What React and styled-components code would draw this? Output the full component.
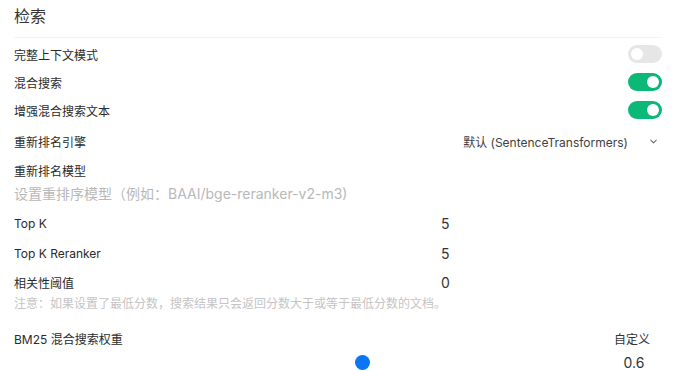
import React, { useState } from "react";
import styled, { createGlobalStyle } from "styled-components";

const GlobalStyle = createGlobalStyle`
  html, body {
    margin: 0;
    padding: 0;
    background: #ffffff;
  }
  body {
    font-family: "Inter", "Noto Sans CJK SC", sans-serif;
    color: #262626;
  }
`;

const Panel = styled.div`
  width: 648px;
  padding: 0 33px 0 14px;
  display: flex;
  flex-direction: column;
`;

const Title = styled.div`
  padding-top: 6px;
  height: 20px;
  line-height: 20px;
  font-size: 16px;
  font-weight: 400;
  color: #333;
`;

const Divider = styled.hr`
  margin: 11px 0 2px;
  border: none;
  height: 1px;
  background: #f3f3f3;
`;

const Row = styled.div`
  display: flex;
  align-items: center;
  justify-content: space-between;
  height: ${(p) => p.h || 28}px;
  margin-top: ${(p) => p.mt || 0}px;
`;

const Label = styled.div`
  font-size: 12px;
  font-weight: 400;
  color: #2a2a2a;
`;

const Track = styled.button`
  width: 34px;
  height: 18px;
  border-radius: 9px;
  border: none;
  padding: 0 3px;
  display: flex;
  align-items: center;
  justify-content: ${(p) => (p.on ? "flex-end" : "flex-start")};
  background: ${(p) => (p.on ? "#0cb877" : "#e6e6e6")};
  cursor: pointer;
`;

const Knob = styled.span`
  width: 12px;
  height: 12px;
  border-radius: 50%;
  background: #fff;
`;

const Toggle = ({ on, onClick }) => (
  <Track on={on} onClick={onClick}>
    <Knob />
  </Track>
);

const SelectBox = styled.div`
  display: flex;
  align-items: center;
  gap: 20px;
  font-size: 12px;
  color: #404040;
  padding-right: 3px;
`;

const Placeholder = styled.input`
  height: 22px;
  border: none;
  outline: none;
  padding: 0;
  background: transparent;
  font-family: inherit;
  font-size: 14px;
  color: #262626;
  &::placeholder {
    color: #b8b8b8;
  }
`;

const NumberInput = styled.input`
  width: 221px;
  border: none;
  outline: none;
  padding: 0;
  background: transparent;
  font-family: inherit;
  font-size: 14px;
  color: #333;
`;

const Note = styled.div`
  height: 16px;
  line-height: 16px;
  font-size: 12px;
  color: #c4c4c4;
`;

const LinkButton = styled.button`
  border: none;
  background: transparent;
  font-family: inherit;
  font-size: 12px;
  color: #333;
  padding: 0 12px 0 0;
  cursor: pointer;
`;

const Range = styled.input`
  -webkit-appearance: none;
  appearance: none;
  margin: 0;
  width: 584px;
  height: 16px;
  background: transparent;
  &::-webkit-slider-thumb {
    -webkit-appearance: none;
    width: 15px;
    height: 15px;
    border-radius: 50%;
    background: #0a76f6;
    border: none;
  }
  &::-webkit-slider-runnable-track {
    background: transparent;
  }
`;

const RangeValue = styled.div`
  width: 56px;
  text-align: center;
  font-size: 14px;
  color: #333;
`;

const Chevron = () => (
  <svg width="11" height="11" viewBox="0 0 24 24" fill="none" stroke="#666" strokeWidth="2.2" strokeLinecap="round" strokeLinejoin="round">
    <path d="m6 9 6 6 6-6" />
  </svg>
);

export default function App() {
  const [full, setFull] = useState(false);
  const [hybrid, setHybrid] = useState(true);
  const [enhanced, setEnhanced] = useState(true);
  const [weight, setWeight] = useState(0.6);

  return (
    <>
      <GlobalStyle />
      <Panel>
        <Title>检索</Title>
        <Divider />
        <Row>
          <Label>完整上下文模式</Label>
          <Toggle on={full} onClick={() => setFull(!full)} />
        </Row>
        <Row>
          <Label>混合搜索</Label>
          <Toggle on={hybrid} onClick={() => setHybrid(!hybrid)} />
        </Row>
        <Row>
          <Label>增强混合搜索文本</Label>
          <Toggle on={enhanced} onClick={() => setEnhanced(!enhanced)} />
        </Row>
        <Row h={34}>
          <Label>重新排名引擎</Label>
          <SelectBox>
            <span>默认 (SentenceTransformers)</span>
            <Chevron />
          </SelectBox>
        </Row>
        <Row h={24}>
          <Label>重新排名模型</Label>
        </Row>
        <Placeholder placeholder="设置重排序模型（例如：BAAI/bge-reranker-v2-m3)" />
        <Row h={30} mt={4}>
          <Label>Top K</Label>
          <NumberInput type="text" defaultValue="5" />
        </Row>
        <Row h={30}>
          <Label>Top K Reranker</Label>
          <NumberInput type="text" defaultValue="5" />
        </Row>
        <Row h={28}>
          <Label>相关性阈值</Label>
          <NumberInput type="text" defaultValue="0" />
        </Row>
        <Note>注意：如果设置了最低分数，搜索结果只会返回分数大于或等于最低分数的文档。</Note>
        <Row h={24} mt={14}>
          <Label>BM25 混合搜索权重</Label>
          <LinkButton>自定义</LinkButton>
        </Row>
        <Row h={24}>
          <Range
            type="range"
            min="0"
            max="1"
            step="0.01"
            value={weight}
            onChange={(e) => setWeight(parseFloat(e.target.value))}
          />
          <RangeValue>{weight}</RangeValue>
        </Row>
      </Panel>
    </>
  );
}
